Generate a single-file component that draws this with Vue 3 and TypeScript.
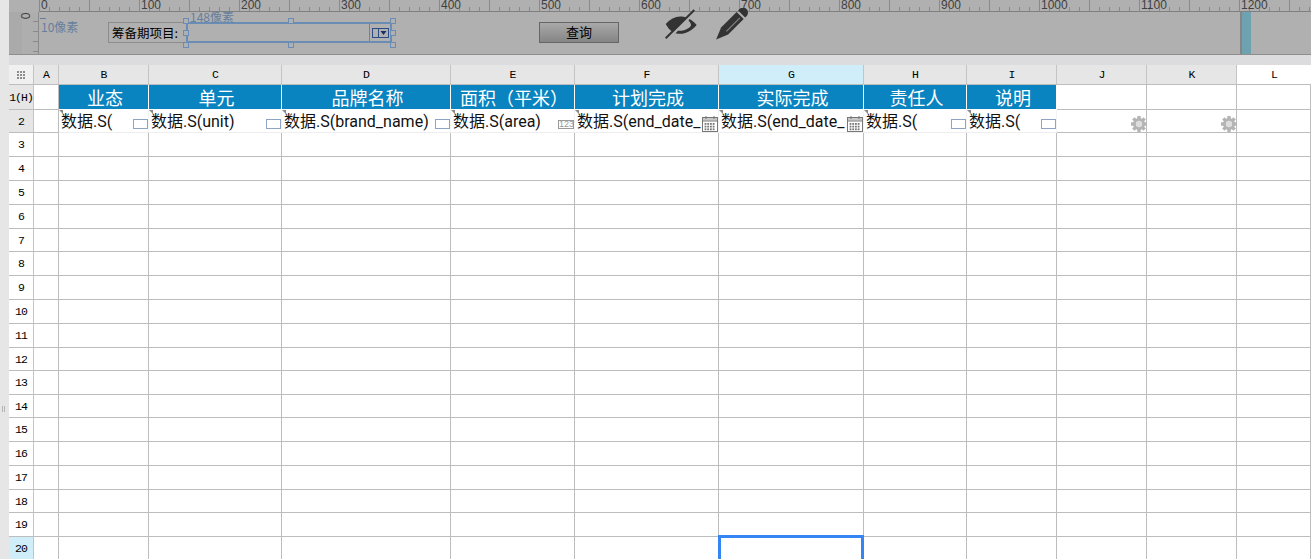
<script setup lang="ts">
interface Col { label: string; width: number; title?: string; data?: string; widget?: string }

const cols: Col[] = [
  { label: 'A', width: 25 },
  { label: 'B', width: 90, title: '业态', data: '数据.S(', widget: 'box' },
  { label: 'C', width: 133, title: '单元', data: '数据.S(unit)', widget: 'box' },
  { label: 'D', width: 169, title: '品牌名称', data: '数据.S(brand_name)', widget: 'box' },
  { label: 'E', width: 124, title: '面积（平米）', data: '数据.S(area)', widget: 'num' },
  { label: 'F', width: 144, title: '计划完成', data: '数据.S(end_date_', widget: 'cal' },
  { label: 'G', width: 145, title: '实际完成', data: '数据.S(end_date_', widget: 'cal' },
  { label: 'H', width: 103, title: '责任人', data: '数据.S(', widget: 'box' },
  { label: 'I', width: 90, title: '说明', data: '数据.S(', widget: 'box' },
  { label: 'J', width: 90, widget: 'gear' },
  { label: 'K', width: 90, widget: 'gear' },
  { label: 'L', width: 74 }
]
const rowHeights = [25, 23, 24, 24, 24, 24, 23, 24, 24, 24, 24, 23, 24, 23, 24, 24, 24, 23, 24, 24]
const gridStyle = {
  gridTemplateColumns: `25px ${cols.map(c => c.width + 'px').join(' ')}`,
  gridTemplateRows: `20px ${rowHeights.map(h => h + 'px').join(' ')}`
}
const rowName = (i: number) => (i === 0 ? '1(H)' : String(i + 1))

const majors: number[] = []
for (let i = 0; i <= 12; i++) majors.push(i * 100)
const ticks: number[] = []
for (let i = 0; i <= 1280; i += 10) ticks.push(i)
const vticks = [10, 20, 30, 40]
const gearTeeth = [0, 45, 90, 135]
const calCells: number[][] = []
for (let r = 0; r < 3; r++) for (let c = 0; c < 4; c++) calCells.push([2.6 + c * 2.7, 7 + r * 2.7])
const dots = [0, 1, 2]
</script>

<template>
  <div class="app">
    <div class="strip"><span class="grip"></span></div>
    <div class="main">
      <section class="design">
        <svg class="hruler" width="1302" height="12" viewBox="0 0 1302 12">
          <line v-for="t in ticks" :key="t" :x1="30.5 + t" :x2="30.5 + t" :y1="t % 50 === 0 ? 0 : 7" y2="11" stroke="#8a8a8a" />
          <text v-for="m in majors" :key="m" :x="32 + m" y="9" class="rtext">{{ m }}</text>
          <rect x="30" y="11" width="1272" height="1.5" fill="#808080" />
        </svg>
        <div class="body">
          <div class="vruler">
            <span class="vzero">0</span>
            <svg class="vticks" width="7" height="42" viewBox="0 0 7 42">
              <line v-for="t in vticks" :key="t" x1="2" x2="7" :y1="t - 0.5" :y2="t - 0.5" stroke="#8a8a8a" />
            </svg>
          </div>
          <div class="canvas">
            <span class="note note-left">10像素</span>
            <label class="qlabel">筹备期项目:</label>
            <div class="select">
              <span class="note note-top">148像素</span>
              <span class="sel-arrow">
                <svg width="17" height="12" viewBox="0 0 17 12">
                  <rect x="0.5" y="1.5" width="16" height="9" fill="none" stroke="#2c4a86" />
                  <line x1="6.5" x2="6.5" y1="1" y2="11" stroke="#2c4a86" />
                  <path d="M8.5 4 H14.5 L11.5 8 Z" fill="#1b2c63" />
                </svg>
              </span>
              <i class="h h1"></i><i class="h h2"></i><i class="h h3"></i><i class="h h4"></i>
              <i class="h h5"></i><i class="h h6"></i><i class="h h7"></i><i class="h h8"></i>
            </div>
            <button class="query" type="button">查询</button>
            <svg class="eye" width="34" height="32" viewBox="0 0 34 32">
              <path fill="#333" d="M1.7 16 C6 11 11 8.5 16 8.5 C18.5 8.5 21 8.9 23 9.8 L8.5 24 C5.5 22 3.5 19 1.7 16 Z" />
              <path fill="#333" d="M25.5 11 C29 13 31 15 32.7 17 C28 22.5 22 25.8 16 25.8 C14.5 25.8 13 25.6 11.5 25.2 L14 22.8 C19.5 23.3 25 21 27 17.5 C27 15.5 26 14 24.5 12.5 Z" />
              <line x1="1.7" y1="30.3" x2="30.3" y2="2" stroke="#333" stroke-width="2" />
            </svg>
            <svg class="pen" width="36" height="32" viewBox="0 0 36 32">
              <g transform="translate(28.3 5.3) rotate(45)" fill="#333">
                <path d="M-5 1 V-1 A5 5 0 0 1 5 -1 V1 Z" />
                <path d="M-5 3 H5 V25 L0 37 L-5 25 Z" />
                <line x1="1.5" x2="1.5" y1="5" y2="24" stroke="#8a8a8a" stroke-width="1" />
              </g>
            </svg>
          </div>
          <div class="margin"></div>
        </div>
      </section>
      <div class="band"></div>
      <div class="sheet" :style="gridStyle">
        <div class="corner">
          <span v-for="d in dots" :key="d" class="dotline"><i></i><i></i><i></i></span>
        </div>
        <div
          v-for="c in cols"
          :key="c.label"
          class="colhead"
          :class="{ active: c.label === 'G', blank: c.label === 'L' }"
        >{{ c.label }}</div>

        <template v-for="(h, r) in rowHeights" :key="r">
          <div class="rowhead" :class="{ shaded: r < 2, active: r === 19 }">{{ rowName(r) }}</div>
          <div
            v-for="c in cols"
            :key="c.label + r"
            class="cell"
            :class="{
              title: r === 0 && c.title,
              data: r === 1 && c.title
            }"
          >
            <template v-if="r === 0 && c.title">{{ c.title }}</template>
            <template v-if="r === 1">
              <i v-if="c.data" class="corner-mark"></i>
              <span v-if="c.data" class="dtext">{{ c.data }}</span>
              <i v-if="c.widget === 'box'" class="w-box"></i>
              <span v-if="c.widget === 'num'" class="w-num">123</span>
              <svg v-if="c.widget === 'cal'" class="w-cal" width="16" height="16" viewBox="0 0 16 16">
                <rect x="0.5" y="1.5" width="15" height="14" fill="#fff" stroke="#777" />
                <rect x="1" y="2" width="14" height="2.5" fill="#c8c8c8" />
                <rect x="1" y="4.5" width="14" height="1" fill="#777" />
                <rect x="3.5" y="0" width="1" height="3" fill="#777" />
                <rect x="11.5" y="0" width="1" height="3" fill="#777" />
                <rect v-for="(p, i) in calCells" :key="i" :x="p[0]" :y="p[1]" width="1.8" height="1.8" fill="#777" />
              </svg>
              <svg v-if="c.widget === 'gear'" class="w-gear" width="16" height="16" viewBox="0 0 16 16">
                <rect v-for="a in gearTeeth" :key="a" x="6.3" y="0" width="3.4" height="16" fill="#b4b4b4" :transform="`rotate(${a} 8 8)`" />
                <circle cx="8" cy="8" r="6" fill="#b4b4b4" />
                <circle cx="8" cy="8" r="3.2" fill="#dedede" />
              </svg>
            </template>
            <div v-if="r === 19 && c.label === 'G'" class="selection"><i class="sel-handle"></i></div>
          </div>
        </template>
      </div>
    </div>
  </div>
</template>

<style>
html, body { margin: 0; overflow: hidden; background: #fff; }
</style>

<style scoped>
.app {
  display: flex;
  width: 1311px;
  height: 559px;
  overflow: hidden;
  font-family: Roboto, "Noto Sans CJK SC", sans-serif;
}
.strip {
  position: relative;
  flex: 0 0 9px;
  background: #e6e6e6;
}
.grip {
  position: absolute;
  left: 2px;
  top: 406px;
  width: 1px;
  height: 6px;
  border-left: 1px solid #b4b4b4;
  border-right: 1px solid #b4b4b4;
}
.main { flex: 1; min-width: 0; display: flex; flex-direction: column; }
.design { flex: none; height: 55px; background: #b0b0b0; display: flex; flex-direction: column; box-sizing: border-box; border-bottom: 1px solid #8e8e8e; }
.hruler { display: block; flex: none; }
.rtext { font: 12px "Liberation Sans", sans-serif; fill: #404040; }
.body { flex: 1; display: flex; min-height: 0; }
.vruler { position: relative; flex: 0 0 30px; background: linear-gradient(90deg, #aaa 0 13px, #aeaeae 13px); border-right: 1px solid #8a8a8a; box-sizing: border-box; }
.vzero { position: absolute; left: 14px; top: -3px; font: 12px "Liberation Sans", sans-serif; color: #404040; transform: rotate(-90deg); }
.vticks { position: absolute; right: 0; top: 0; }
.canvas {
  position: relative;
  flex: 0 0 1203px;
  box-sizing: border-box;
  border-right: 2px solid #858585;
  display: flex;
  align-items: flex-start;
  padding: 10px 0 0 69px;
}
.margin { flex: 0 0 9px; background: #6fa2b0; }
.note { position: absolute; font: 12px "Noto Sans CJK SC", sans-serif; color: #667f9c; white-space: nowrap; }
.note-left { left: 2px; top: 6px; }
.note-left::before { content: ""; position: absolute; left: -1px; top: 0; width: 6px; height: 1px; background: #667f9c; }
.note-top { left: 2px; top: -14px; height: 14px; line-height: 14px; overflow: hidden; }
.qlabel {
  flex: 0 0 78px;
  height: 21px;
  box-sizing: border-box;
  border: 1px solid #8c8c8c;
  border-right: 0;
  font: 12.5px/19px "Noto Sans CJK SC", sans-serif;
  color: #000;
  padding-left: 3px;
  white-space: nowrap;
}
.select {
  position: relative;
  flex: 0 0 206px;
  height: 21px;
  box-sizing: border-box;
  border: 2px solid #6a8db5;
  display: flex;
  justify-content: flex-end;
}
.sel-arrow { width: 20px; border-left: 1px solid #808080; display: flex; align-items: center; justify-content: center; }
.h { position: absolute; width: 4px; height: 4px; border: 1px solid #6a8db5; background: #b0b0b0; }
.h1 { left: -5px; top: -6px; }
.h2 { left: 100px; top: -6px; }
.h3 { right: -6px; top: -6px; }
.h4 { left: -5px; top: 6px; }
.h5 { right: -6px; top: 6px; }
.h6 { left: -5px; bottom: -7px; }
.h7 { left: 100px; bottom: -7px; }
.h8 { right: -6px; bottom: -7px; }
.query {
  flex: 0 0 80px;
  height: 21px;
  margin-left: 147px;
  padding: 0 0 2px;
  box-sizing: border-box;
  border: 1px solid #666;
  background: linear-gradient(#a9a9a9, #858585);
  font: 13px/17px "Noto Sans CJK SC", sans-serif;
  color: #000;
}
.eye { flex: none; margin: -14px 0 0 45px; }
.pen { flex: none; margin: -14px 0 0 16px; }
.band { height: 10px; background: #dcdcde; flex: none; }
.sheet { display: grid; flex: none; }
.corner {
  background: #f0f0f0;
  border-right: 1px solid #c4c4c4;
  border-bottom: 1px solid #bdbdbd;
  box-sizing: border-box;
  display: flex;
  flex-direction: column;
  align-items: center;
  justify-content: center;
  gap: 1px;
}
.dotline { display: flex; gap: 1px; }
.dotline i { width: 2px; height: 2px; background: #8c8c8c; }
.colhead, .rowhead {
  box-sizing: border-box;
  font: 11.5px "Liberation Mono", monospace;
  letter-spacing: -1px;
  color: #000;
  display: flex;
  align-items: center;
  justify-content: center;
  border-right: 1px solid #c4c4c4;
  border-bottom: 1px solid #bdbdbd;
}
.colhead { background: #e6e6e6; }
.colhead.active, .rowhead.active { background: #cfeefa; }
.colhead.blank { background: #fff; border-right: 0; }
.rowhead { background: #fff; }
.rowhead.shaded { background: #e6e6e6; }
.cell {
  position: relative;
  box-sizing: border-box;
  border-right: 1px solid #bdbdbd;
  border-bottom: 1px solid #bdbdbd;
  min-width: 0;
}
.cell.title {
  background: #0a84c0;
  color: #fff;
  border-right-color: #fff;
  border-bottom-color: #fff;
  font-size: 18px;
  line-height: 24px;
  padding-left: 3px;
  text-align: center;
  white-space: nowrap;
  font-family: "Noto Sans CJK SC", sans-serif;
}
.cell.data { border-right-color: #f4f4f4; border-bottom-color: #eeeeee; }
.dtext {
  position: absolute;
  left: 2px;
  top: 0;
  font-size: 16px;
  line-height: 23px;
  color: #111;
  white-space: nowrap;
}
.corner-mark {
  position: absolute;
  left: 0;
  top: 0;
  width: 0;
  height: 0;
  border-top: 4px solid #888;
  border-left: 4px solid transparent;
}
.w-box { position: absolute; right: 0; top: 9px; width: 15px; height: 10px; box-sizing: border-box; border: 1px solid #8ea4c4; background: #fff; }
.w-num { position: absolute; right: 0; top: 10px; width: 16px; height: 9px; box-sizing: border-box; border: 1px solid #999; font: 9px/7px "Liberation Sans", sans-serif; color: #999; text-align: center; background: #fff; overflow: hidden; }
.w-cal, .w-gear { position: absolute; right: 0; top: 6px; }
.w-gear { right: -1px; }
.selection { position: absolute; left: -1px; top: -2px; right: -1px; height: 60px; box-sizing: border-box; border: 3px solid #3585f5; pointer-events: none; }
.sel-handle { position: absolute; right: -3px; top: 21px; width: 5px; height: 1px; background: #3585f5; }
</style>
